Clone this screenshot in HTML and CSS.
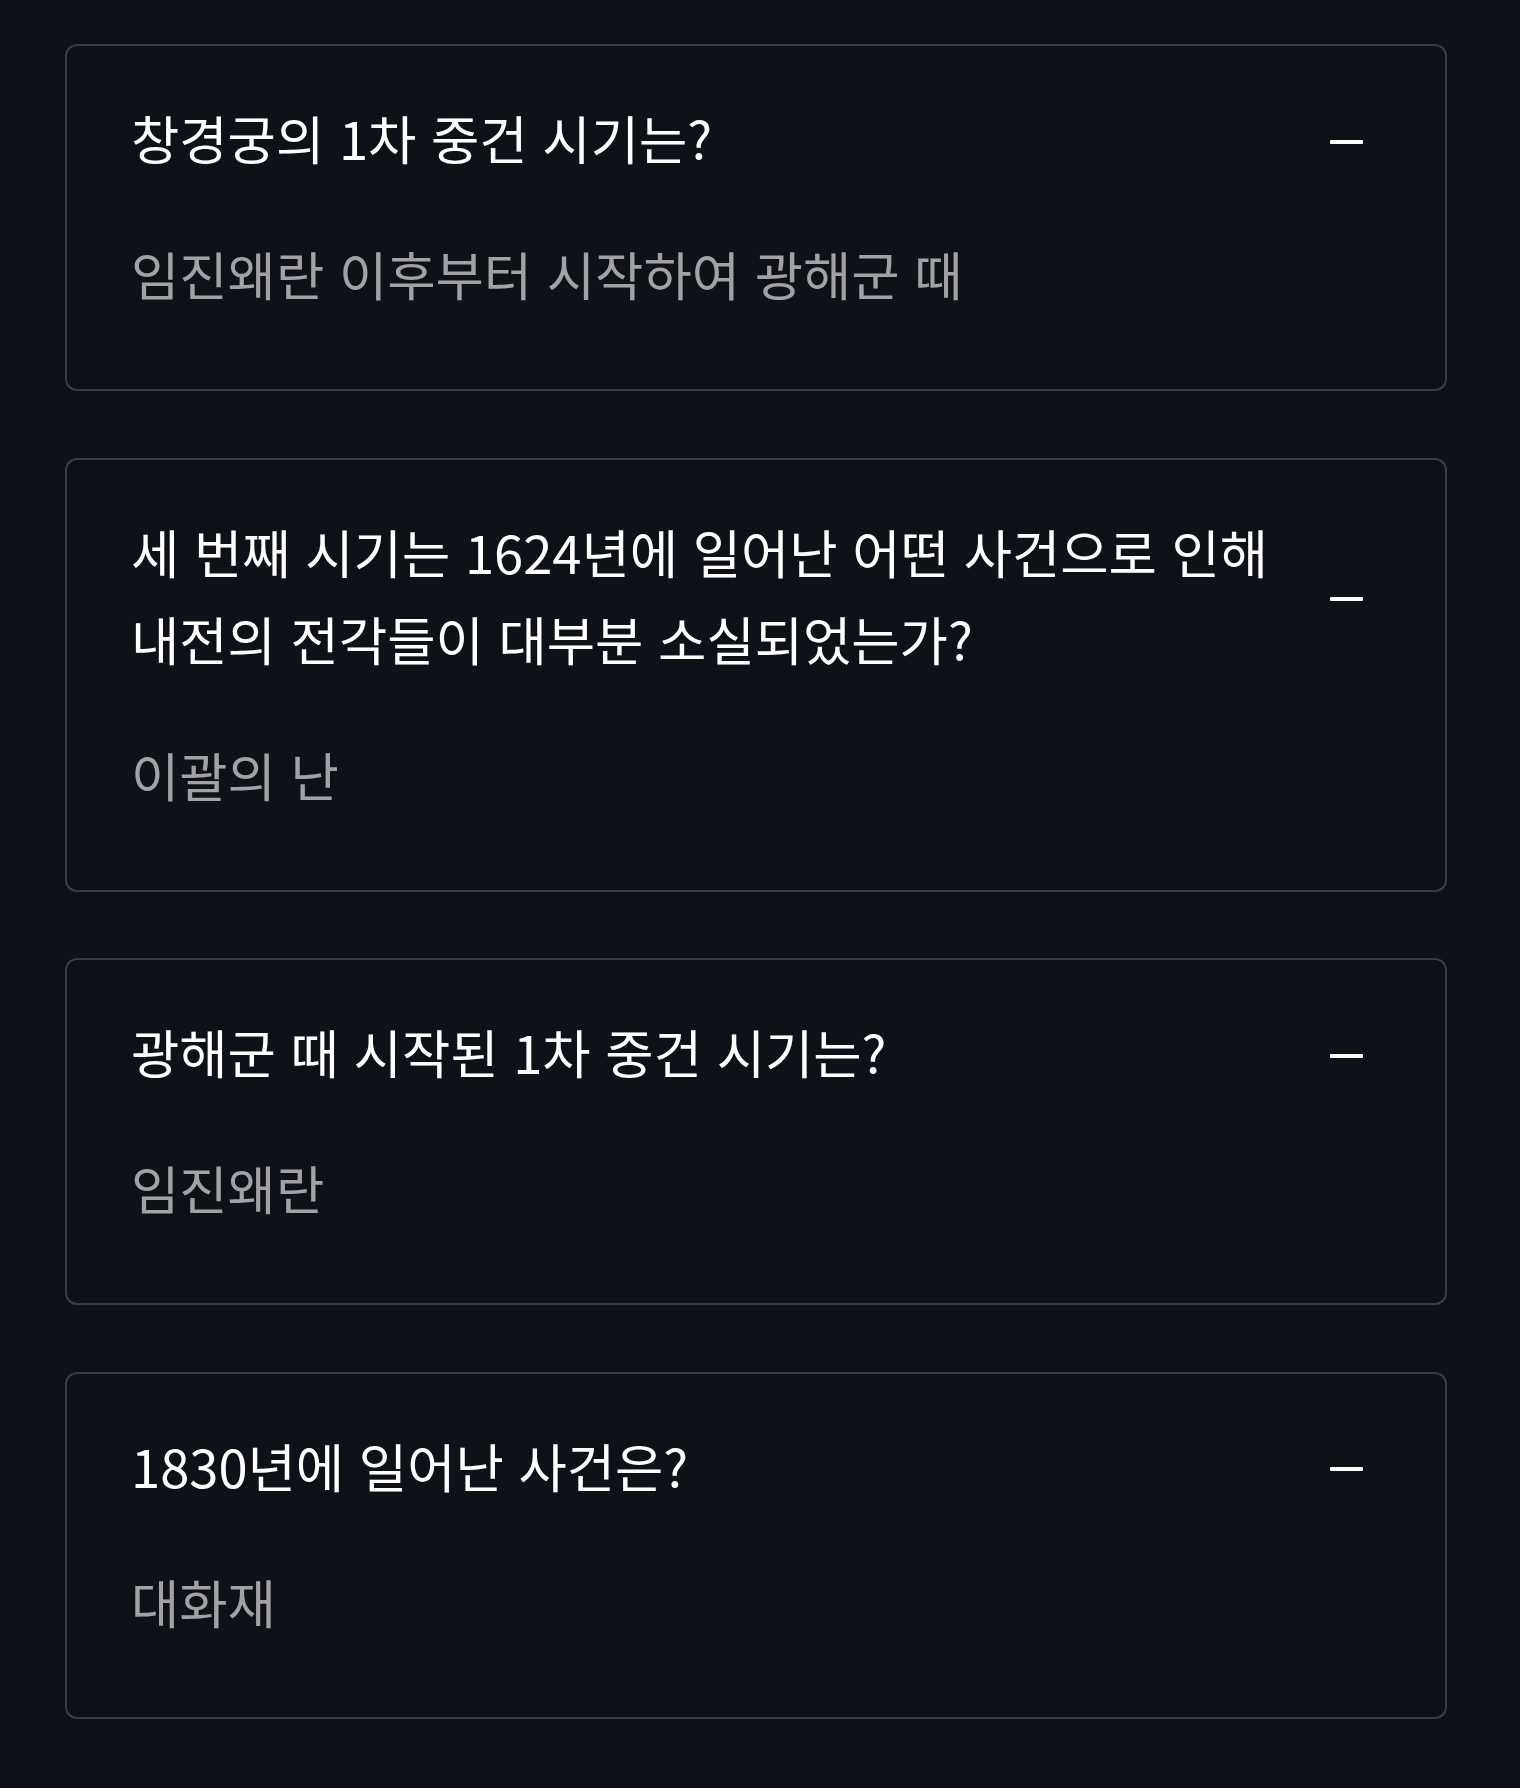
FILE: index.html
```html
<!DOCTYPE html>
<html lang="ko">
<head>
<meta charset="utf-8">
<title>FAQ</title>
<link rel="stylesheet" href="styles.css">
</head>
<body>
<main class="faq">
  <section class="card">
    <div class="card-head">
      <h3 class="question">창경궁의 1차 중건 시기는?</h3>
      <span class="toggle"></span>
    </div>
    <p class="answer">임진왜란 이후부터 시작하여 광해군 때</p>
  </section>
  <section class="card">
    <div class="card-head">
      <h3 class="question">세 번째 시기는 1624년에 일어난 어떤 사건으로 인해 내전의 전각들이 대부분 소실되었는가?</h3>
      <span class="toggle"></span>
    </div>
    <p class="answer">이괄의 난</p>
  </section>
  <section class="card">
    <div class="card-head">
      <h3 class="question">광해군 때 시작된 1차 중건 시기는?</h3>
      <span class="toggle"></span>
    </div>
    <p class="answer">임진왜란</p>
  </section>
  <section class="card">
    <div class="card-head">
      <h3 class="question">1830년에 일어난 사건은?</h3>
      <span class="toggle"></span>
    </div>
    <p class="answer">대화재</p>
  </section>
</main>
</body>
</html>
```
FILE: styles.css
```css
html, body {
  margin: 0;
  padding: 0;
  background: #0e1118;
}
body {
  font-family: "Noto Sans CJK KR", "Noto Sans", sans-serif;
  color: #ffffff;
}
.faq {
  display: flex;
  flex-direction: column;
  gap: 66.5px;
  padding: 44px 73px 70px 65px;
}
.card {
  border: 2px solid #3a3d43;
  border-radius: 12px;
  padding: 48px 82px 70px 64px;
}
.card-head {
  display: flex;
  align-items: center;
  gap: 40px;
}
.question {
  flex: 1;
  margin: 0;
  font-size: 52.5px;
  font-weight: 400;
  line-height: 87px;
  color: #ffffff;
  word-break: keep-all;
}
.toggle {
  flex: none;
  width: 33px;
  height: 4px;
  margin-top: 8px;
  background: #ffffff;
  border-radius: 1px;
}
.answer {
  margin: 46px 0 0;
  font-size: 52.5px;
  line-height: 92px;
  color: #a2a2a4;
  word-break: keep-all;
}
```
